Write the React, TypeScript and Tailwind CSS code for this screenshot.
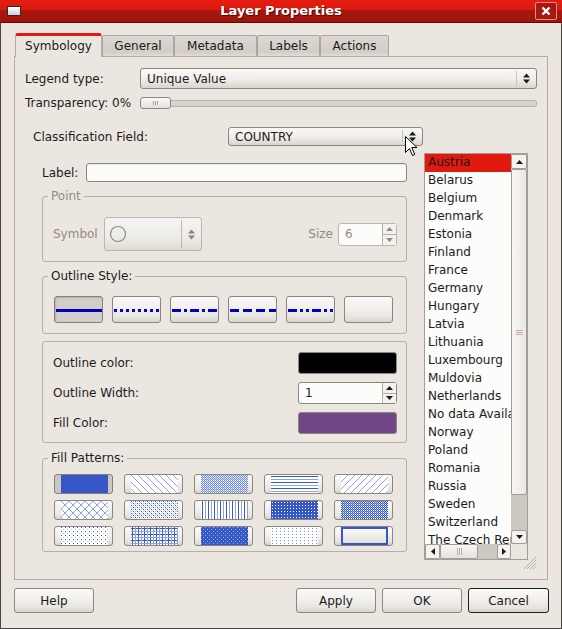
import React from "react";

const BLUE = "#3557c8";
const LIGHT = "#8ea3e6";

const face =
  "bg-[linear-gradient(#fbfaf8,#f2f0ed_45%,#e8e5e0_80%,#d6d2cc)]";
const comboFace =
  "bg-[linear-gradient(#f9f8f6,#f1efec_50%,#e6e3de_75%,#d8d4ce)]";

function UpDown({ color = "#1a1a1a" }: { color?: string }) {
  return (
    <svg width="7" height="11" viewBox="0 0 7 11">
      <path d="M3.5 0.5L7 4.5H0Z M0 6.5H7L3.5 10.5Z" fill={color} />
    </svg>
  );
}

function Combo({
  children,
  className = "",
  disabled = false,
}: {
  children: React.ReactNode;
  className?: string;
  disabled?: boolean;
}) {
  return (
    <div
      className={`flex items-stretch rounded-[3px] border ${
        disabled ? "border-[#bab5af] bg-[linear-gradient(#f5f4f2,#efedea_50%,#e8e5e1_80%,#dedad5)]" : `border-[#8b8680] ${comboFace}`
      } ${className}`}
    >
      <div className="flex flex-1 items-center overflow-hidden pl-[6px]">{children}</div>
      <div className={`my-[2px] w-px ${disabled ? "bg-[#bdb8b2]" : "bg-[#c9c5bf]"}`} />
      <div className="flex w-[19px] items-center justify-center">
        <UpDown color={disabled ? "#85817c" : "#1a1a1a"} />
      </div>
    </div>
  );
}

function Spin({
  value,
  className = "",
  disabled = false,
}: {
  value: string;
  className?: string;
  disabled?: boolean;
}) {
  const c = disabled ? "#8f8b86" : "#1a1a1a";
  return (
    <div
      className={`flex rounded-[3px] border bg-[#fcfcfb] ${
        disabled ? "border-[#bab5af] text-[#8f8b86]" : "border-[#8b8680]"
      } ${className}`}
    >
      <div className="flex flex-1 items-center pl-[6px]">{value}</div>
      <div className="flex w-[14px] flex-col border-l border-[#b5b0aa] bg-[#f4f2ef]">
        <div className="flex flex-1 items-center justify-center border-b border-[#b5b0aa]">
          <svg width="7" height="4" viewBox="0 0 7 4">
            <path d="M3.5 0L7 4H0Z" fill={c} />
          </svg>
        </div>
        <div className="flex flex-1 items-center justify-center">
          <svg width="7" height="4" viewBox="0 0 7 4">
            <path d="M0 0H7L3.5 4Z" fill={c} />
          </svg>
        </div>
      </div>
    </div>
  );
}

function Group({
  title,
  className = "",
  disabled = false,
  children,
}: {
  title?: string;
  className?: string;
  disabled?: boolean;
  children: React.ReactNode;
}) {
  return (
    <div className={`relative rounded-[3px] border border-[#b4afa9] ${className}`}>
      {title && (
        <span
          className={`absolute left-[5px] top-[-8px] bg-[#ebe7e0] px-[3px] leading-[14px] ${
            disabled ? "text-[#8f8b86]" : ""
          }`}
        >
          {title}
        </span>
      )}
      {children}
    </div>
  );
}

const dashes: (string | undefined)[] = [undefined, "3 3", "9 3 3 3", "9 4", "9 3 3 3 3 3"];

function OutlineButton({ i }: { i: number }) {
  const pressed = i === 0;
  return (
    <div
      className={`h-[27px] w-[49px] rounded-[3px] border ${
        pressed
          ? "border-[#847f79] bg-[#d3cec8] shadow-[inset_1px_1px_2px_rgba(0,0,0,0.15)]"
          : `border-[#8b8680] ${face}`
      }`}
    >
      {i < 5 && (
        <svg width="47" height="25" viewBox="0 0 47 25">
          <line x1="1" y1="13.5" x2="47" y2="13.5" stroke="#0000c4" strokeWidth="3" strokeDasharray={dashes[i]} />
        </svg>
      )}
    </div>
  );
}

type Pat =
  | "solid"
  | "bdiag"
  | "dense4"
  | "hor"
  | "fdiag"
  | "dcross"
  | "dense5"
  | "ver"
  | "dense2"
  | "dense3"
  | "dense6"
  | "cross"
  | "dense1"
  | "dense7"
  | "none";

const patterns: Pat[] = [
  "solid", "bdiag", "dense4", "hor", "fdiag",
  "dcross", "dense5", "ver", "dense2", "dense3",
  "dense6", "cross", "dense1", "dense7", "none",
];

function patternBody(kind: Pat) {
  switch (kind) {
    case "bdiag":
      return { w: 7, h: 7, el: <path d="M0 0L7 7M-3.5 3.5L3.5 10.5M3.5 -3.5L10.5 3.5" stroke="#7f98e2" strokeWidth="0.9" /> };
    case "fdiag":
      return { w: 7, h: 7, el: <path d="M0 7L7 0M-3.5 3.5L3.5 -3.5M3.5 10.5L10.5 3.5" stroke="#7f98e2" strokeWidth="0.9" /> };
    case "dcross":
      return {
        w: 8,
        h: 8,
        el: <path d="M0 0L8 8M-4 4L4 12M4 -4L12 4M0 8L8 0M-4 4L4 -4M4 12L12 4" stroke="#7f98e2" strokeWidth="0.9" />,
      };
    case "hor":
      return {
        w: 4,
        h: 6,
        el: (
          <>
            <rect x="0" y="1" width="4" height="1" fill={BLUE} />
            <rect x="0" y="4" width="4" height="1" fill={LIGHT} />
          </>
        ),
      };
    case "ver":
      return {
        w: 6,
        h: 4,
        el: (
          <>
            <rect x="1" y="0" width="1" height="4" fill={BLUE} />
            <rect x="4" y="0" width="1" height="4" fill={LIGHT} />
          </>
        ),
      };
    case "cross":
      return {
        w: 6,
        h: 6,
        el: (
          <>
            <rect x="0" y="1" width="6" height="1" fill={BLUE} />
            <rect x="1" y="0" width="1" height="6" fill={BLUE} />
            <rect x="0" y="4" width="6" height="1" fill={LIGHT} />
            <rect x="4" y="0" width="1" height="6" fill={LIGHT} />
          </>
        ),
      };
    case "dense1":
      return {
        w: 4,
        h: 4,
        el: (
          <>
            <rect width="4" height="4" fill={BLUE} />
            <rect x="0" y="0" width="1" height="1" fill="#9fb3ee" />
            <rect x="2" y="2" width="1" height="1" fill="#9fb3ee" />
          </>
        ),
      };
    case "dense2":
      return {
        w: 3,
        h: 3,
        el: (
          <>
            <rect width="3" height="3" fill={BLUE} />
            <rect x="1" y="1" width="1" height="1" fill="#ffffff" />
          </>
        ),
      };
    case "dense3":
      return {
        w: 2,
        h: 2,
        el: (
          <>
            <rect x="0" y="0" width="1" height="1" fill={BLUE} />
            <rect x="1" y="1" width="1" height="1" fill={BLUE} />
            <rect x="1" y="0" width="1" height="1" fill="#9cb0ec" />
          </>
        ),
      };
    case "dense4":
      return {
        w: 2,
        h: 2,
        el: (
          <>
            <rect x="0" y="0" width="1" height="1" fill="#6d8ae0" />
            <rect x="1" y="1" width="1" height="1" fill="#6d8ae0" />
            <rect x="1" y="0" width="1" height="1" fill="#cbd6f6" />
          </>
        ),
      };
    case "dense5":
      return {
        w: 4,
        h: 4,
        el: (
          <>
            <rect x="0" y="0" width="1" height="1" fill={BLUE} />
            <rect x="2" y="2" width="1" height="1" fill={BLUE} />
            <rect x="2" y="0" width="1" height="1" fill="#a9bbf0" />
            <rect x="0" y="2" width="1" height="1" fill="#a9bbf0" />
            <rect x="1" y="1" width="1" height="1" fill="#c9d4f6" />
            <rect x="3" y="3" width="1" height="1" fill="#c9d4f6" />
          </>
        ),
      };
    case "dense6":
      return {
        w: 4,
        h: 4,
        el: (
          <>
            <rect x="0" y="0" width="1" height="1" fill={BLUE} />
            <rect x="2" y="2" width="1" height="1" fill="#aabcf0" />
          </>
        ),
      };
    case "dense7":
      return { w: 4, h: 3, el: <rect x="1" y="1" width="1" height="1" fill="#6d8ae0" /> };
    default:
      return { w: 1, h: 1, el: null };
  }
}

function FillButton({ kind, idx }: { kind: Pat; idx: number }) {
  const pressed = kind === "solid";
  const id = `fillpat-${idx}`;
  const p = patternBody(kind);
  const diag = kind === "bdiag" || kind === "fdiag" || kind === "dcross";
  return (
    <div
      className={`flex h-[20px] w-[59px] items-center rounded-[3px] border pl-[6px] ${
        pressed ? "border-[#847f79] bg-[#cbc6c0]" : `border-[#8b8680] ${face}`
      }`}
    >
      {kind === "solid" ? (
        <div className="h-[18px] w-[47px] bg-[#3557c8]" />
      ) : kind === "none" ? (
        <div className="h-[18px] w-[47px] border-2 border-[#3557c8]" />
      ) : (
        <svg width="47" height="18" viewBox="0 0 47 18" shapeRendering={diag ? "auto" : "crispEdges"}>
          <defs>
            <pattern id={id} width={p.w} height={p.h} patternUnits="userSpaceOnUse">
              {p.el}
            </pattern>
          </defs>
          <rect width="47" height="18" fill="#ffffff" />
          <rect width="47" height="18" fill={`url(#${id})`} />
        </svg>
      )}
    </div>
  );
}

const countries = [
  "Austria", "Belarus", "Belgium", "Denmark", "Estonia", "Finland", "France", "Germany",
  "Hungary", "Latvia", "Lithuania", "Luxembourg", "Muldovia", "Netherlands", "No data Available",
  "Norway", "Poland", "Romania", "Russia", "Sweden", "Switzerland", "The Czech Republic",
];

function CountryList() {
  return (
    <div className="flex h-[407px] w-[104px] flex-col border border-[#a29d97] bg-[#ebe7e0]">
      <div className="flex h-[390px]">
        <div className="w-[86px] overflow-hidden bg-[#fcfcfb]">
          {countries.map((c, i) => (
            <div
              key={c}
              className={`h-[18px] whitespace-nowrap pl-[3px] leading-[17px] ${i === 0 ? "bg-[#e1190e]" : ""}`}
            >
              {c}
            </div>
          ))}
        </div>
        <div className="flex w-[16px] flex-col bg-[#cdc8c2]">
          <div className="flex h-[15px] items-center justify-center rounded-[2px] border border-[#a29d97] bg-[#f5f3f0]">
            <svg width="7" height="4" viewBox="0 0 7 4">
              <path d="M3.5 0L7 4H0Z" fill="#1a1a1a" />
            </svg>
          </div>
          <div className="flex h-[326px] items-center justify-center rounded-[2px] border border-[#a29d97] bg-[linear-gradient(90deg,#f7f6f4,#ebe8e4)]">
            <svg width="7" height="5" viewBox="0 0 7 5">
              <path d="M0 0.5H7M0 2.5H7M0 4.5H7" stroke="#c9a9a4" strokeWidth="1" />
            </svg>
          </div>
          <div className="flex-1" />
          <div className="flex h-[14px] items-center justify-center rounded-[2px] border border-[#a29d97] bg-[#f5f3f0]">
            <svg width="7" height="4" viewBox="0 0 7 4">
              <path d="M0 0H7L3.5 4Z" fill="#1a1a1a" />
            </svg>
          </div>
        </div>
      </div>
      <div className="flex h-[15px]">
        <div className="flex w-[86px] bg-[#cdc8c2]">
          <div className="flex w-[15px] items-center justify-center rounded-[2px] border border-[#a29d97] bg-[#f5f3f0]">
            <svg width="4" height="7" viewBox="0 0 4 7">
              <path d="M0 3.5L4 0V7Z" fill="#1a1a1a" />
            </svg>
          </div>
          <div className="flex w-[38px] items-center justify-center rounded-[2px] border border-[#a29d97] bg-[linear-gradient(#f7f6f4,#e6e3de)]">
            <svg width="5" height="7" viewBox="0 0 5 7">
              <path d="M0.5 0V7M2.5 0V7M4.5 0V7" stroke="#c9a9a4" strokeWidth="1" />
            </svg>
          </div>
          <div className="flex-1" />
          <div className="flex w-[14px] items-center justify-center rounded-[2px] border border-[#a29d97] bg-[#f5f3f0]">
            <svg width="4" height="7" viewBox="0 0 4 7">
              <path d="M4 3.5L0 0V7Z" fill="#1a1a1a" />
            </svg>
          </div>
        </div>
      </div>
    </div>
  );
}

function DialogButton({ label, width, focus = false }: { label: string; width: string; focus?: boolean }) {
  return (
    <div
      className={`flex h-[25px] items-center justify-center rounded-[3px] border ${width} ${
        focus ? "border-[#1f1f1f]" : "border-[#8b8680]"
      } ${face}`}
    >
      {label}
    </div>
  );
}

const tabs = [
  { label: "Symbology", w: "w-[87px]" },
  { label: "General", w: "w-[72px]" },
  { label: "Metadata", w: "w-[83px]" },
  { label: "Labels", w: "w-[63px]" },
  { label: "Actions", w: "w-[69px]" },
];

export default function App() {
  return (
    <div className="flex h-[629px] w-[562px] flex-col overflow-hidden bg-[#ebe7e0] font-['DejaVu_Sans','Liberation_Sans',sans-serif] text-[12px] leading-[14px] text-[#1b1b1b]">
      {/* title bar */}
      <div className="grid h-[23px] grid-cols-[1fr_auto_1fr] items-center border-b border-[#5c0a06] bg-[linear-gradient(#e51c11,#db1a0f_44%,#aa170f_46%,#9e150e)]">
        <div className="pl-[7px]">
          <div className="h-[10px] w-[14px] border border-[#2b2b2b] bg-[linear-gradient(#ffffff,#cfcfcf)]" />
        </div>
        <div className="text-[13px] font-bold text-white [text-shadow:1px_1px_1px_rgba(60,0,0,0.8)]">
          Layer Properties
        </div>
        <div className="flex justify-end pr-[5px]">
          <div className="flex h-[18px] w-[22px] items-center justify-center rounded-[2px] border border-[#e0908a] bg-[#a9180f]">
            <svg width="10" height="10" viewBox="0 0 10 10">
              <path d="M1.5 1.5L8.5 8.5M8.5 1.5L1.5 8.5" stroke="#ffffff" strokeWidth="2.4" />
            </svg>
          </div>
        </div>
      </div>

      <div className="flex flex-1 flex-col border-x border-b border-[#4a4743]">
        {/* tabs */}
        <div className="relative z-10 ml-[14px] mt-[10px] flex h-[24px] items-start">
          {tabs.map((t, i) =>
            i === 0 ? (
              <div
                key={t.label}
                className={`flex h-[24px] items-center justify-center rounded-t-[3px] border-x border-t-[3px] border-x-[#b9a9a6] border-t-[#e2190d] bg-[#ebe7e0] pb-[2px] ${t.w}`}
              >
                {t.label}
              </div>
            ) : (
              <div
                key={t.label}
                className={`mt-[2px] flex h-[21px] items-center justify-center rounded-t-[2px] border border-b-0 border-[#aaa5a0] bg-[linear-gradient(#dcd7d1,#d2cdc7_80%,#e0dcd7)] ${t.w}`}
              >
                {t.label}
              </div>
            )
          )}
        </div>

        {/* tab panel */}
        <div className="relative -mt-px ml-[13px] h-[524px] w-[534px] border border-[#baaaa7]">
          <div className="mt-[11px] flex h-[21px] items-center">
            <div className="w-[125px] pl-[10px]">Legend type:</div>
            <Combo className="h-[21px] w-[397px]">Unique Value</Combo>
          </div>

          <div className="mt-[8px] flex h-[12px] items-center">
            <div className="w-[125px] whitespace-nowrap pl-[10px]">Transparency: 0%</div>
            <div className="flex h-[12px] w-[397px] items-center">
              <div className="flex h-[12px] w-[31px] items-center justify-center rounded-[3px] border border-[#8b8680] bg-[linear-gradient(#fbfaf8,#e4e1dc)]">
                <svg width="5" height="4" viewBox="0 0 5 4">
                  <path d="M0.5 0V4M2.5 0V4M4.5 0V4" stroke="#b59f9b" strokeWidth="1" />
                </svg>
              </div>
              <div className="h-[7px] flex-1 rounded-r-[3px] border border-l-0 border-[#b7b2ac] bg-[#d7d3cd]" />
            </div>
          </div>

          <div className="mt-[18px] flex">
            {/* left column */}
            <div className="w-[408px] pl-[18px]">
              <div className="flex h-[19px] items-center">
                <div className="w-[195px]">Classification Field:</div>
                <div className="relative">
                  <Combo className="h-[19px] w-[195px]">COUNTRY</Combo>
                  <svg
                    className="absolute left-[177px] top-[9px]"
                    width="13"
                    height="21"
                    viewBox="0 0 13 21"
                  >
                    <path
                      d="M0.5 0.5V16.5L4.5 12.5L7.5 19.5L9.8 18.5L6.8 11.5H12Z"
                      fill="#ffffff"
                      stroke="#000000"
                      strokeWidth="1"
                      strokeLinejoin="miter"
                    />
                  </svg>
                </div>
              </div>

              <div className="ml-[9px] w-[365px]">
                <div className="mt-[17px] flex h-[19px] items-center">
                  <div className="w-[44px]">Label:</div>
                  <div className="h-[19px] w-[321px] rounded-[3px] border border-[#8b8680] bg-[#fcfcfb] shadow-[inset_0_1px_1px_rgba(0,0,0,0.08)]" />
                </div>

                <Group title="Point" disabled className="mt-[14px] h-[66px]">
                  <div className="mt-[20px] flex h-[34px] items-center pl-[10px] pr-[9px] text-[#8f8b86]">
                    <div className="w-[51px]">Symbol</div>
                    <Combo disabled className="h-[34px] w-[98px]">
                      <svg width="18" height="18" viewBox="0 0 18 18" className="-ml-[2px]">
                        <circle cx="9" cy="9" r="7.5" fill="none" stroke="#8d8985" strokeWidth="1.2" />
                      </svg>
                    </Combo>
                    <div className="ml-auto">Size</div>
                    <Spin disabled value="6" className="ml-[5px] h-[23px] w-[59px]" />
                  </div>
                </Group>

                <Group title="Outline Style:" className="mt-[14px] h-[58px]">
                  <div className="mt-[19px] flex gap-[9px] pl-[11px]">
                    {[0, 1, 2, 3, 4, 5].map((i) => (
                      <OutlineButton key={i} i={i} />
                    ))}
                  </div>
                </Group>

                <Group className="mt-[7px] h-[102px]">
                  <div className="mt-[10px] flex flex-col gap-[8px] pl-[10px] pr-[9px]">
                    <div className="flex h-[22px] items-center justify-between">
                      <span>Outline color:</span>
                      <div className="h-[22px] w-[99px] rounded-[3px] border border-[#8b8680] bg-black" />
                    </div>
                    <div className="flex h-[22px] items-center justify-between">
                      <span>Outline Width:</span>
                      <Spin value="1" className="h-[22px] w-[99px]" />
                    </div>
                    <div className="flex h-[22px] items-center justify-between">
                      <span>Fill Color:</span>
                      <div className="h-[22px] w-[99px] rounded-[3px] border border-[#8b8680] bg-[#714684]" />
                    </div>
                  </div>
                </Group>

                <Group title="Fill Patterns:" className="mt-[15px] h-[94px]">
                  <div className="mt-[15px] grid grid-cols-[repeat(5,59px)] gap-x-[11px] gap-y-[6px] pl-[11px]">
                    {patterns.map((p, i) => (
                      <FillButton key={i} kind={p} idx={i} />
                    ))}
                  </div>
                </Group>
              </div>
            </div>

            {/* right column */}
            <div className="ml-[1px] mt-[26px]">
              <CountryList />
            </div>
          </div>

          {/* resize grip */}
          <svg className="absolute bottom-[9px] right-[10px]" width="17" height="17" viewBox="0 0 17 17">
            <path d="M16 4L4 16M16 7L7 16M16 10L10 16M16 13L13 16" stroke="#b5b0aa" strokeWidth="1" />
          </svg>
        </div>

        {/* dialog buttons */}
        <div className="mt-[8px] flex h-[25px] pl-[13px] pr-[12px]">
          <DialogButton label="Help" width="w-[80px]" />
          <div className="ml-auto flex gap-[6px]">
            <DialogButton label="Apply" width="w-[80px]" />
            <DialogButton label="OK" width="w-[80px]" />
            <DialogButton label="Cancel" width="w-[81px]" focus />
          </div>
        </div>
      </div>
    </div>
  );
}
